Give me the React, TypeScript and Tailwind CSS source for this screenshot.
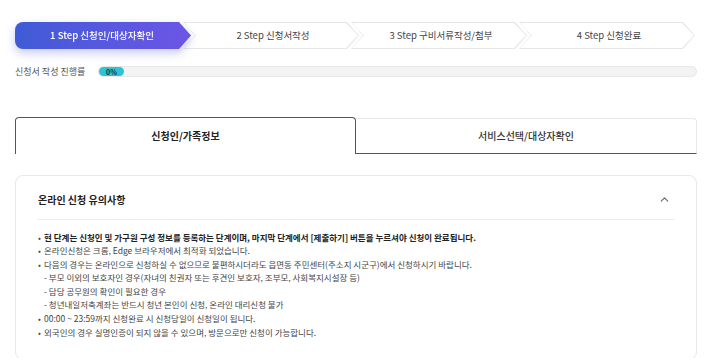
import { ChevronUp } from "lucide-react";

const steps = [
  { label: "1 Step 신청인/대상자확인", active: true },
  { label: "2 Step 신청서작성", active: false },
  { label: "3 Step 구비서류작성/첨부", active: false },
  { label: "4 Step 신청완료", active: false },
];

const notices = [
  { text: "현 단계는 신청인 및 가구원 구성 정보를 등록하는 단계이며, 마지막 단계에서 [제출하기] 버튼을 누르셔야 신청이 완료됩니다.", bold: true, sub: false },
  { text: "온라인신청은 크롬, Edge 브라우저에서 최적화 되었습니다.", bold: false, sub: false },
  { text: "다음의 경우는 온라인으로 신청하실 수 없으므로 불편하시더라도 읍면동 주민센터(주소지 시군구)에서 신청하시기 바랍니다.", bold: false, sub: false },
  { text: "- 부모 이외의 보호자인 경우(자녀의 친권자 또는 후견인 보호자, 조부모, 사회복지시설장 등)", bold: false, sub: true },
  { text: "- 담당 공무원의 확인이 필요한 경우", bold: false, sub: true },
  { text: "- 청년내일저축계좌는 반드시 청년 본인이 신청, 온라인 대리신청 불가", bold: false, sub: true },
  { text: "00:00 ~ 23:59까지 신청완료 시 신청당일이 신청일이 됩니다.", bold: false, sub: false },
  { text: "외국인의 경우 실명인증이 되지 않을 수 있으며, 방문으로만 신청이 가능합니다.", bold: false, sub: false },
];

function Stepper() {
  return (
    <div className="flex h-[27px]">
      {steps.map((step, i) => (
        <div
          key={step.label}
          className={
            "relative w-[176px] " +
            (i === 0 ? "z-40" : i === 1 ? "z-30 -ml-[8px]" : i === 2 ? "z-20 -ml-[8px]" : "z-10 -ml-[8px]")
          }
        >
          {step.active ? (
            <div className="h-full drop-shadow-[0_4px_5px_rgba(70,80,200,0.3)]">
              <div className="h-full overflow-hidden rounded-l-[8px]">
                <div className="flex h-full items-center justify-center bg-gradient-to-r from-[#3f5bd6] to-[#6c55e6] pr-[2px] text-[9.5px] font-medium text-white [clip-path:polygon(0_0,calc(100%-12px)_0,100%_50%,calc(100%-12px)_100%,0_100%)]">
                  {step.label}
                </div>
              </div>
            </div>
          ) : (
            <div className="h-full bg-[#e6e6e6] p-px [clip-path:polygon(0_0,calc(100%-12px)_0,100%_50%,calc(100%-12px)_100%,0_100%,12px_50%)]">
              <div className="flex h-full items-center justify-center bg-white pl-[10px] pr-[6px] text-[9.5px] text-[#444] [clip-path:polygon(0_0,calc(100%-12px)_0,100%_50%,calc(100%-12px)_100%,0_100%,12px_50%)]">
                {step.label}
              </div>
            </div>
          )}
        </div>
      ))}
    </div>
  );
}

export default function App() {
  return (
    <div className="min-h-screen bg-white px-[15px] pt-[22px] font-['Noto_Sans_CJK_KR',sans-serif] text-[#333]">
      <div className="w-[682px]">
        <Stepper />

        {/* progress */}
        <div className="mt-[16px] flex items-center">
          <span className="w-[83px] text-[9px] text-[#555]">신청서 작성 진행률</span>
          <div className="h-[11px] flex-1 rounded-full border border-[#e8e8e8] bg-[#f3f3f3]">
            <div className="flex h-full w-[25px] items-center justify-center rounded-full bg-[#2cc3d5] text-[7px] font-bold text-[#16323a]">
              0%
            </div>
          </div>
        </div>

        {/* tabs */}
        <div className="mt-[38px] flex h-[37px]">
          <div className="flex w-[341px] items-center justify-center rounded-t-[4px] border border-b-0 border-[#555] text-[10px] font-bold text-[#222]">
            신청인/가족정보
          </div>
          <div className="mt-px flex flex-1 items-center justify-center rounded-tr-[4px] border-t border-r border-b border-t-[#e8e8e8] border-r-[#e8e8e8] border-b-[#555] text-[10px] font-medium text-[#333]">
            서비스선택/대상자확인
          </div>
        </div>

        {/* notice card */}
        <div className="mt-[21px] rounded-[8px] border border-[#e8e8e8] px-[22px] pb-[20px] pt-[16px]">
          <div className="flex h-[16px] items-center justify-between">
            <span className="text-[10px] font-bold text-[#222]">온라인 신청 유의사항</span>
            <ChevronUp className="mr-[3px] h-[13px] w-[13px] text-[#666]" strokeWidth={2} />
          </div>
          <div className="mt-[11px] border-t border-[#ececec]" />
          <ul className="mt-[11px] text-[8.5px] leading-[13.6px] text-[#444]">
            {notices.map((n) => (
              <li key={n.text} className={"flex " + (n.sub ? "pl-[6px]" : "")}>
                {!n.sub && <span className="w-[6px] shrink-0">•</span>}
                <span className={n.bold ? "font-bold text-[#222]" : ""}>{n.text}</span>
              </li>
            ))}
          </ul>
        </div>
      </div>
    </div>
  );
}
